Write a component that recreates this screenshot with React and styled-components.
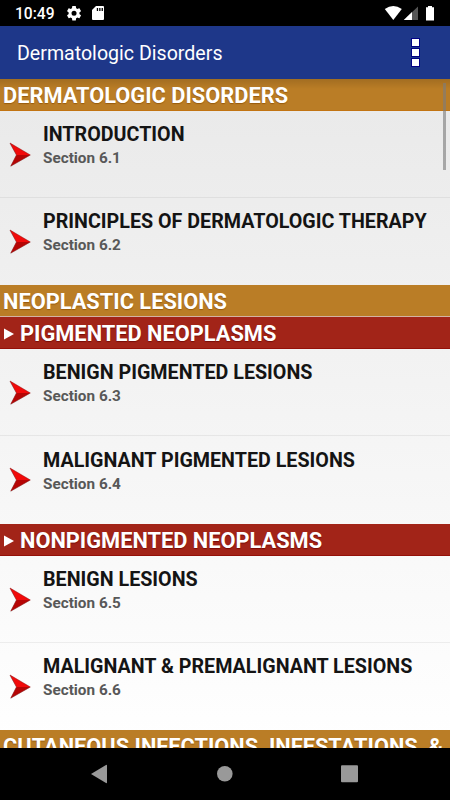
import styled, { createGlobalStyle } from "styled-components";

const GlobalStyle = createGlobalStyle`
	* {
		box-sizing: border-box;
	}
	body {
		margin: 0;
		background: #000;
		font-family: Roboto, "Liberation Sans", sans-serif;
	}
`;

const Screen = styled.div`
	display: flex;
	flex-direction: column;
	width: 450px;
	height: 800px;
	overflow: hidden;
	background: #000;
`;

const StatusBar = styled.div`
	flex: none;
	display: flex;
	align-items: center;
	height: 26px;
	padding: 0 16px 0 15px;
	color: #fff;
`;
const Clock = styled.span`
	width: 51px;
	font-size: 15.6px;
	font-weight: 500;
	line-height: 26px;
	padding-top: 1px;
`;
const StatusIcons = styled.svg`
	display: block;
	flex: none;
	margin-left: ${({ $right }) => ($right ? "auto" : 0)};
`;

const AppBar = styled.header`
	flex: none;
	display: flex;
	align-items: center;
	justify-content: space-between;
	height: 52.8px;
	padding: 0 31px 0 17px;
	background: #1e3789;
`;
const AppTitle = styled.h1`
	margin: 0;
	padding-top: 3px;
	color: #fff;
	font-size: 19.6px;
	font-weight: 400;
	line-height: 26px;
	white-space: nowrap;
`;
const MenuButton = styled.div`
	display: flex;
	flex-direction: column;
	gap: 3px;
`;
const MenuDot = styled.span`
	width: 7px;
	height: 7px;
	background: #fff;
	box-shadow: 0 0 0 1px #020286;
`;

const ListArea = styled.main`
	position: relative;
	flex: 1;
	overflow: hidden;
	background: linear-gradient(#e9e9e9, #fff);
`;
const ScrollThumb = styled.div`
	position: absolute;
	top: 4px;
	right: 4px;
	width: 3px;
	height: 87px;
	background: rgba(125, 125, 125, 0.62);
`;
const TopShade = styled.div`
	position: absolute;
	top: 0;
	left: 0;
	width: 100%;
	height: 10px;
	background: linear-gradient(rgba(0, 0, 0, 0.13), rgba(0, 0, 0, 0));
`;

const Heading = styled.h2`
	display: flex;
	align-items: center;
	gap: 6px;
	height: 31.8px;
	margin: 0;
	padding: 3px 3px 0;
	background: ${({ $sub }) => ($sub ? "#a22418" : "#ba7d26")};
	border-bottom: 1px solid ${({ $sub, $joined }) => ($sub ? "#941008" : $joined ? "#d3b3a4" : "#c27412")};
	color: #fff;
	font-size: 21.8px;
	font-weight: 700;
	line-height: 28px;
	white-space: nowrap;
	text-shadow: 0 1px 1px ${({ $sub }) => ($sub ? "#780c06" : "#985b0c")};
`;

const Item = styled.div`
	display: flex;
	height: 87.4px;
	padding: 11px 0 0 9px;
	border-bottom: 1px solid ${({ $last }) => ($last ? "transparent" : "rgba(0, 0, 0, 0.06)")};
`;
const ItemText = styled.div`
	padding: 0.4px 0 0 12px;
`;
const ItemTitle = styled.div`
	color: #141414;
	font-size: 19.7px;
	font-weight: 700;
	line-height: 26px;
	white-space: nowrap;
`;
const ItemSection = styled.div`
	color: #585858;
	font-size: 15.3px;
	font-weight: 700;
	line-height: 20px;
`;
const ArrowIcon = styled.svg`
	flex: none;
	margin-top: 20px;
`;

const NavBar = styled.nav`
	flex: none;
	height: 52px;
	display: flex;
	align-items: center;
	justify-content: center;
`;

const sections = [
	{
		title: "DERMATOLOGIC DISORDERS",
		items: [
			["INTRODUCTION", "6.1"],
			["PRINCIPLES OF DERMATOLOGIC THERAPY", "6.2"],
		],
	},
	{ title: "NEOPLASTIC LESIONS", items: [] },
	{
		title: "PIGMENTED NEOPLASMS",
		sub: true,
		items: [
			["BENIGN PIGMENTED LESIONS", "6.3"],
			["MALIGNANT PIGMENTED LESIONS", "6.4"],
		],
	},
	{
		title: "NONPIGMENTED NEOPLASMS",
		sub: true,
		items: [
			["BENIGN LESIONS", "6.5"],
			["MALIGNANT & PREMALIGNANT LESIONS", "6.6"],
		],
	},
	{ title: "CUTANEOUS INFECTIONS, INFESTATIONS, &", items: [] },
];

const Arrow = () => (
	<ArrowIcon width="22" height="26" viewBox="0 0 22 26">
		<path d="M.5 1.5 7 13 1 25.2 21 13.5z" fill="#777" opacity=".35" />
		<path d="M1 1 21.3 13H7.5z" fill="#f20a0a" />
		<path d="M7.5 13h13.8L1.8 24z" fill="#b50505" />
		<path d="M1 1 21.3 13 1.8 24 7.5 13z" fill="none" stroke="#8e0808" strokeWidth=".5" />
	</ArrowIcon>
);

const SectionBlock = ({ title, sub, items }) => (
	<section>
		<Heading $sub={sub} $joined={!items.length}>
			{sub && (
				<svg width="11" height="12" viewBox="0 0 11 12">
					<path d="M1 .5 11 6 1 11.5z" fill="#fff" />
				</svg>
			)}
			{title}
		</Heading>
		{items.map(([name, number], i) => (
			<Item key={number} $last={i === items.length - 1}>
				<Arrow />
				<ItemText>
					<ItemTitle>{name}</ItemTitle>
					<ItemSection>Section {number}</ItemSection>
				</ItemText>
			</Item>
		))}
	</section>
);

const App = () => {
	return (
		<>
			<GlobalStyle />
			<Screen>
				<StatusBar>
					<Clock>10:49</Clock>
					<StatusIcons width="40" height="26" viewBox="0 0 40 26">
						<path
							transform="translate(-.6 4.6) scale(.72)"
							fill="#fff"
							fillRule="evenodd"
							d="M19.43 12.98c.04-.32.07-.64.07-.98s-.03-.66-.07-.98l2.11-1.65c.19-.15.24-.42.12-.64l-2-3.46c-.12-.22-.39-.3-.61-.22l-2.49 1c-.52-.4-1.08-.73-1.69-.98l-.38-2.65A.49.49 0 0 0 14 2h-4c-.25 0-.46.18-.49.42l-.38 2.65c-.61.25-1.17.59-1.69.98l-2.49-1c-.23-.09-.49 0-.61.22l-2 3.46c-.13.22-.07.49.12.64l2.11 1.65c-.04.32-.07.65-.07.98s.03.66.07.98l-2.11 1.65c-.19.15-.24.42-.12.64l2 3.46c.12.22.39.3.61.22l2.49-1c.52.4 1.08.73 1.69.98l.38 2.65c.03.24.24.42.49.42h4c.25 0 .46-.18.49-.42l.38-2.65c.61-.25 1.17-.59 1.69-.98l2.49 1c.23.09.49 0 .61-.22l2-3.46c.12-.22.07-.49-.12-.64zM12 15.5a3.5 3.5 0 1 1 0-7 3.5 3.5 0 0 1 0 7z"
						/>
						<path
							fill="#fff"
							fillRule="evenodd"
							d="M30 6h7a1 1 0 0 1 1 1v12a1 1 0 0 1-1 1H27a1 1 0 0 1-1-1v-9zm.8 2v3h1.3V8zm2.4 0v3h1.3V8zm2.4 0v3h1.3V8z"
						/>
					</StatusIcons>
					<StatusIcons $right width="50" height="26" viewBox="0 0 50 26">
						<path d="M.8 9.1Q9.3 2.8 17.8 9.1L9.3 20z" fill="#fff" />
						<path d="M19.8 20 34 6.5V20z" fill="#555" />
						<path d="M19.8 20 28 12v8z" fill="#fff" />
						<path d="M44 6h4v1.3h2V20.6h-8V7.3h2z" fill="#fff" />
					</StatusIcons>
				</StatusBar>
				<AppBar>
					<AppTitle>Dermatologic Disorders</AppTitle>
					<MenuButton>
						<MenuDot />
						<MenuDot />
						<MenuDot />
					</MenuButton>
				</AppBar>
				<ListArea>
					{sections.map((section) => (
						<SectionBlock key={section.title} {...section} />
					))}
					<TopShade />
					<ScrollThumb />
				</ListArea>
				<NavBar>
					<svg width="450" height="52" viewBox="0 0 450 52">
						<g fill="#999">
							<path d="M91 26 106 17q1-.5 1 .7v16.6q0 1.200-1 .7z" />
							<circle cx="224.800" cy="25.700" r="7.800" />
							<rect x="341" y="17.300" width="17" height="17" rx="1" />
						</g>
					</svg>
				</NavBar>
			</Screen>
		</>
	);
};
export default App;
